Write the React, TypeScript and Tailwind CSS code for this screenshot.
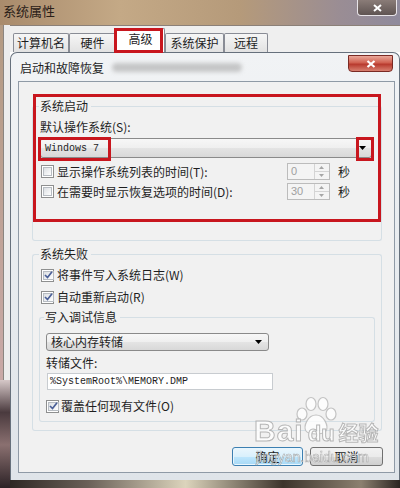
import React from "react";

function CheckBox({ checked = false }: { checked?: boolean }) {
  return (
    <span className="w-[13px] h-[13px] shrink-0 border border-[#8e8f8f] bg-white p-px flex">
      <span className="flex-1 border border-[#b7bcc2] bg-[linear-gradient(135deg,#dcdfe3,#ffffff)] flex items-center justify-center">
        {checked && (
          <svg width="9" height="8" viewBox="0 0 9 8">
            <path d="M1 4 L3.5 6.5 L8 0.8" stroke="#4a5f97" strokeWidth="1.7" fill="none" />
          </svg>
        )}
      </span>
    </span>
  );
}

function Spinner({ value }: { value: string }) {
  return (
    <div className="flex w-[43px] h-[17px] border border-[#bcbcbc] bg-[#f4f4f4]">
      <span className="flex-1 pl-[3px] text-[#a0a0a0] leading-[15px] text-[11px] font-['Liberation_Sans',sans-serif]">
        {value}
      </span>
      <div className="w-[15px] flex flex-col border-l border-[#d4d4d4]">
        <div className="flex-1 flex items-center justify-center border-b border-[#d4d4d4]">
          <svg width="5" height="3" viewBox="0 0 5 3">
            <path d="M0 3h5L2.5 0z" fill="#a6a6a6" />
          </svg>
        </div>
        <div className="flex-1 flex items-center justify-center">
          <svg width="5" height="3" viewBox="0 0 5 3">
            <path d="M0 0h5L2.5 3z" fill="#a6a6a6" />
          </svg>
        </div>
      </div>
    </div>
  );
}

function Arrow() {
  return (
    <svg width="7" height="4" viewBox="0 0 7 4" className="ml-auto shrink-0">
      <path d="M0 0h7L3.5 4z" fill="#000" />
    </svg>
  );
}

function GroupBox({
  label,
  lead,
  className,
  bodyClass,
  children,
}: {
  label: string;
  lead: string;
  className: string;
  bodyClass: string;
  children: React.ReactNode;
}) {
  return (
    <div className={"flex flex-col " + className}>
      <div className="flex h-[16px]">
        <div className={"mt-[8px] border-t border-l border-[#d5dfe5] rounded-tl-[3px] " + lead} />
        <span className="pl-px pr-[3px] leading-[16px]">{label}</span>
        <div className="flex-1 mt-[8px] border-t border-r border-[#d5dfe5] rounded-tr-[3px]" />
      </div>
      <div className={"flex flex-col border-x border-b border-[#d5dfe5] rounded-b-[3px] " + bodyClass}>
        {children}
      </div>
    </div>
  );
}

function Tab({ label, w, active = false }: { label: string; w: string; active?: boolean }) {
  return (
    <div
      className={
        "flex items-center justify-center border border-b-0 border-[#898c95] rounded-t-[2px] " +
        w +
        (active
          ? " h-[24px] bg-white pb-[4px]"
          : " h-[19px] bg-[linear-gradient(#f6f6f6,#e2e2e2)]")
      }
    >
      {label}
    </div>
  );
}

export default function App() {
  return (
    <div className="relative w-[400px] h-[488px] overflow-hidden flex flex-col text-[12px] text-[#1e1e1e] font-['Noto_Sans_CJK_SC','Noto_Sans',sans-serif]">
      {/* outer window title bar */}
      <div className="h-[25px] shrink-0 flex items-start bg-[linear-gradient(90deg,#a98b6c,#c4a986_30%,#b59a7a_60%,#9a8d94_85%,#8f8a9c)]">
        <span className="ml-[3px] mt-[2px] leading-[18px] text-[13px] text-[#2a2018]">系统属性</span>
        <div className="ml-auto mr-[3px] w-[40px] h-[16px] rounded-b-[4px] border border-t-0 border-[#e8e4e8] bg-[linear-gradient(#8a7c78,#5f5452)] flex items-center justify-center">
          <svg width="9" height="8" viewBox="0 0 9 8">
            <path d="M1 1 L8 7 M8 1 L1 7" stroke="#fff" strokeWidth="2" />
          </svg>
        </div>
      </div>

      <div className="flex flex-1">
        {/* left strip: outer window edge and desktop */}
        <div className="w-[10px] shrink-0 flex flex-col">
          <div className="h-[355px] flex">
            <div className="w-[3px] bg-[linear-gradient(#b39a82,#c9a9a7)]" />
            <div className="flex-1 border-l border-[#8a8580] bg-[#ececec]" />
          </div>
          <div className="flex-1 bg-[linear-gradient(#d6c8c8,#4a3a3e_30%,#8a7070_60%,#2c2226)]" />
        </div>

        <div className="flex-1 flex flex-col">
          {/* tab strip */}
          <div className="h-[27px] shrink-0 flex items-end pl-[3px] bg-[#efefef] border-t border-[#8b8078]">
            <Tab label="计算机名" w="w-[56px]" />
            <Tab label="硬件" w="w-[47px]" />
            <Tab label="高级" w="w-[49px]" active />
            <Tab label="系统保护" w="w-[59px]" />
            <Tab label="远程" w="w-[44px]" />
          </div>

          {/* dialog 启动和故障恢复 */}
          <div className="w-[390px] h-[428px] shrink-0 flex flex-col rounded-t-[7px] border border-b-0 border-[#66707c] bg-[linear-gradient(#f1f3f5,#dfe4e9)]">
            <div className="h-[28px] shrink-0 flex items-start">
              <span className="ml-[9px] mt-[7px] leading-[16px]">启动和故障恢复</span>
              <div className="ml-[8px] mt-[10px] w-[130px] h-[9px] rounded-full bg-[#a8a8a8] opacity-60 blur-[2px]" />
              <div className="ml-auto mr-[6px] mt-[2px] w-[45px] h-[17px] rounded-b-[4px] border border-[#7a2a24] bg-[linear-gradient(#eaa89a,#d06050_45%,#b83a2e_55%,#d88070)] flex items-center justify-center">
                <svg width="10" height="8" viewBox="0 0 10 8">
                  <path d="M1.5 1 L8.5 7 M8.5 1 L1.5 7" stroke="#fff" strokeWidth="2.2" />
                </svg>
              </div>
            </div>

            <div className="ml-[7px] mr-[4px] h-[392px] shrink-0 flex flex-col border border-[#8f9aa6] bg-[#f1f1f1]">
              {/* 系统启动 */}
              <GroupBox
                label="系统启动"
                lead="w-[7px]"
                className="ml-[13px] mt-[16px] w-[350px]"
                bodyClass="pl-[7px] pb-[40px]"
              >
                <div className="mt-[5px] h-[16px] leading-[16px]">默认操作系统(S):</div>
                <div className="mt-[3px] w-[332px] h-[20px] flex items-center pl-[4px] pr-[5px] border border-[#8a8a8a] rounded-[3px] bg-[linear-gradient(#f7f7f7_0%,#efefef_50%,#e4e4e4_51%,#d8d8d8_100%)]">
                  <span className="font-['Liberation_Mono',monospace] text-[10px]">Windows 7</span>
                  <Arrow />
                </div>
                <div className="mt-[5px] w-[332px] h-[17px] flex items-center">
                  <span className="ml-px"><CheckBox /></span>
                  <span className="ml-[3px] flex-1 leading-[16px]">显示操作系统列表的时间(T):</span>
                  <Spinner value="0" />
                  <span className="ml-[8px] mr-[22px]">秒</span>
                </div>
                <div className="mt-[3px] w-[332px] h-[17px] flex items-center">
                  <span className="ml-px"><CheckBox /></span>
                  <span className="ml-[3px] flex-1 leading-[16px]">在需要时显示恢复选项的时间(D):</span>
                  <Spinner value="30" />
                  <span className="ml-[8px] mr-[22px]">秒</span>
                </div>
              </GroupBox>

              {/* 系统失败 */}
              <GroupBox
                label="系统失败"
                lead="w-[7px]"
                className="ml-[13px] mt-[5px] w-[350px]"
                bodyClass="pl-[6px] pb-[8px]"
              >
                <div className="ml-[2px] mt-[5px] h-[16px] flex items-center gap-[3px]">
                  <CheckBox checked />
                  <span className="leading-[16px]">将事件写入系统日志(W)</span>
                </div>
                <div className="ml-[2px] mt-[6px] h-[16px] flex items-center gap-[3px]">
                  <CheckBox checked />
                  <span className="leading-[16px]">自动重新启动(R)</span>
                </div>
                <GroupBox
                  label="写入调试信息"
                  lead="w-[5px]"
                  className="mt-[4px] w-[336px]"
                  bodyClass="pl-[6px] pb-[7px]"
                >
                  <div className="mt-[8px] w-[223px] h-[18px] flex items-center pl-[4px] pr-[6px] border border-[#8a8a8a] rounded-[3px] bg-[linear-gradient(#f7f7f7_0%,#efefef_50%,#e4e4e4_51%,#d8d8d8_100%)]">
                    <span className="leading-[16px]">核心内存转储</span>
                    <Arrow />
                  </div>
                  <div className="mt-[4px] h-[16px] leading-[16px]">转储文件:</div>
                  <div className="ml-px mt-[2px] w-[226px] h-[17px] flex items-center pl-[2px] border border-[#c8ccd0] bg-white">
                    <span className="font-['Liberation_Mono',monospace] text-[10px]">%SystemRoot%\MEMORY.DMP</span>
                  </div>
                  <div className="mt-[8px] h-[16px] flex items-center gap-[2px]">
                    <CheckBox checked />
                    <span className="leading-[16px]">覆盖任何现有文件(O)</span>
                  </div>
                </GroupBox>
              </GroupBox>

              {/* buttons */}
              <div className="mt-[16px] flex justify-end gap-[7px] pr-[11px]">
                <div className="w-[71px] h-[19px] flex items-center justify-center rounded-[3px] border border-[#3c7fb1] bg-[linear-gradient(#eaf6fd_0%,#d9f0fc_50%,#bee6fd_51%,#a7d9f5_100%)] shadow-[inset_0_0_0_1px_#e8f6fe]">
                  确定
                </div>
                <div className="w-[73px] h-[19px] flex items-center justify-center rounded-[3px] border border-[#707070] bg-[linear-gradient(#f2f2f2_0%,#ebebeb_50%,#dddddd_51%,#cfcfcf_100%)]">
                  取消
                </div>
              </div>
            </div>
          </div>

          {/* desktop below the dialog */}
          <div className="flex-1 bg-[linear-gradient(90deg,#2e2824,#6a6058_20%,#dcd4bc_45%,#3c342c_70%,#8c8070_90%,#2a2420)]" />
        </div>
      </div>

      {/* red annotation frames */}
      <div className="absolute left-[114px] top-[28px] w-[49px] h-[25px] border-[3px] border-[#c8161e]" />
      <div className="absolute left-[33px] top-[94px] w-[348px] h-[128px] border-[3px] border-[#c8161e]" />
      <div className="absolute left-[38px] top-[137px] w-[73px] h-[24px] border-[3px] border-[#c8161e]" />
      <div className="absolute left-[356px] top-[137px] w-[18px] h-[24px] border-[3px] border-[#c8161e]" />

      {/* Baidu watermark */}
      <div className="absolute left-[254px] top-[396px] w-[125px] h-[70px] opacity-80 pointer-events-none">
        <svg className="absolute left-[40px] top-0" width="44" height="40" viewBox="0 0 44 40">
          <g fill="#ffffff" stroke="#b8b8b8" strokeWidth="1.2">
            <ellipse cx="8" cy="18" rx="5" ry="6" />
            <ellipse cx="17" cy="8" rx="5" ry="6.5" />
            <ellipse cx="29" cy="8" rx="5" ry="6.5" />
            <ellipse cx="37" cy="18" rx="5" ry="6" />
            <path d="M22 19 C14 19 9 30 12 35 C15 39 29 39 32 35 C35 30 30 19 22 19 Z" />
          </g>
        </svg>
        <div className="absolute left-0 top-[21px] flex items-end font-['Liberation_Sans',sans-serif] font-bold text-white [-webkit-text-stroke:1px_#a8a8a8]">
          <span className="text-[30px] leading-[28px] tracking-[1px]">Bai</span>
          <span className="ml-[4px] text-[22px] leading-[22px]">du</span>
          <span className="ml-[4px] text-[20px] leading-[24px] font-['Noto_Sans_CJK_SC',sans-serif]">经验</span>
        </div>
        <div className="absolute left-[2px] top-[53px] text-[14px] leading-[16px] font-['Liberation_Sans',sans-serif] text-white [-webkit-text-stroke:0.6px_#9a9a9a]">
          jingyan.baidu.com
        </div>
      </div>
    </div>
  );
}
